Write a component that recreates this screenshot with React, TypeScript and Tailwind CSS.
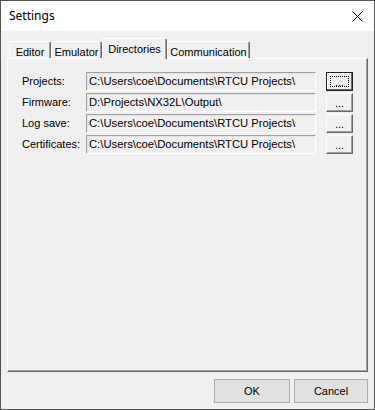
import React from "react";

const rows = [
  { label: "Projects:", value: "C:\\Users\\coe\\Documents\\RTCU Projects\\" },
  { label: "Firmware:", value: "D:\\Projects\\NX32L\\Output\\" },
  { label: "Log save:", value: "C:\\Users\\coe\\Documents\\RTCU Projects\\" },
  { label: "Certificates:", value: "C:\\Users\\coe\\Documents\\RTCU Projects\\" },
];

const tabs = [
  { name: "Editor", w: "w-[42px]" },
  { name: "Emulator", w: "w-[51px]" },
  { name: "Directories", w: "w-[65px]", active: true },
  { name: "Communication", w: "w-[83px]" },
];

function Tab({ name, w, active }: { name: string; w: string; active?: boolean }) {
  if (active) {
    return (
      <div
        className={`${w} h-[21px] -mb-[1px] relative z-10 flex items-start justify-center pt-[2px] bg-[#f0f0f0] border-l border-t border-white border-r border-r-[#696969] shadow-[inset_-1px_0_0_#a0a0a0] rounded-t-[2px]`}
      >
        {name}
      </div>
    );
  }
  return (
    <div
      className={`${w} h-[17px] flex items-start justify-center pt-[2px] bg-[#f0f0f0] border-l border-t border-white border-r border-r-[#696969] shadow-[inset_-1px_0_0_#a0a0a0] rounded-t-[2px]`}
    >
      {name}
    </div>
  );
}

function BrowseButton({ focused }: { focused?: boolean }) {
  return (
    <div
      className={`relative w-[27px] h-[19px] flex items-end justify-center pb-[2px] bg-[#f0f0f0] leading-none ${
        focused
          ? "border border-[#202020] shadow-[inset_-1px_-1px_0_#696969,inset_1px_1px_0_#ffffff]"
          : "border-t border-l border-white border-r border-b border-r-[#696969] border-b-[#696969] shadow-[inset_-1px_-1px_0_#a0a0a0]"
      }`}
    >
      ...
      {focused && (
        <div className="absolute inset-[3px] border border-dotted border-black" />
      )}
    </div>
  );
}

export default function App() {
  return (
    <div
      className="w-[375px] h-[410px] flex flex-col border border-[#555555] bg-[#f0f0f0] text-black text-[11px] select-none"
      style={{ fontFamily: '"Liberation Sans", Arial, sans-serif' }}
    >
      {/* title bar */}
      <div className="h-[30px] shrink-0 bg-white flex items-center justify-between pl-[8px] pr-[10px]">
        <span className="text-[12px]" style={{ fontFamily: '"Noto Sans", sans-serif' }}>
          Settings
        </span>
        <svg width="11" height="11" viewBox="0 0 11 11" className="mr-[1px]">
          <path d="M0.5 0.5 L10.5 10.5 M10.5 0.5 L0.5 10.5" stroke="#000" strokeWidth="1" fill="none" />
        </svg>
      </div>

      <div className="flex-1 flex flex-col px-[6px] pt-[7px] pb-[6px]">
        <div className="flex items-end pl-[2px] h-[20px]">
          {tabs.map((t) => (
            <Tab key={t.name} name={t.name} w={t.w} active={t.active} />
          ))}
        </div>

        {/* tab panel */}
        <div className="flex-1 border-t border-l border-white border-r border-b border-r-[#696969] border-b-[#696969] shadow-[inset_-1px_-1px_0_#a0a0a0] pl-[14px] pt-[13px] flex flex-col gap-[2px]">
          {rows.map((r, i) => (
            <div key={r.label} className="flex items-center h-[19px]">
              <div className="w-[64px]">{r.label}</div>
              <div className="w-[230px] h-[19px] flex items-center pl-[2px] bg-[#f0f0f0] border-t border-l border-[#a0a0a0] border-r border-b border-r-white border-b-white shadow-[inset_1px_1px_0_#e3e3e3] text-[11.25px] whitespace-nowrap overflow-hidden">
                {r.value}
              </div>
              <div className="ml-[10px]">
                <BrowseButton focused={i === 0} />
              </div>
            </div>
          ))}
        </div>

        <div className="flex justify-end gap-[4px] mt-[7px]">
          <button className="w-[76px] h-[24px] bg-[#e1e1e1] border border-[#adadad] text-[11px]">
            OK
          </button>
          <button className="w-[74px] h-[24px] bg-[#e1e1e1] border border-[#adadad] text-[11px]">
            Cancel
          </button>
        </div>
      </div>
    </div>
  );
}
